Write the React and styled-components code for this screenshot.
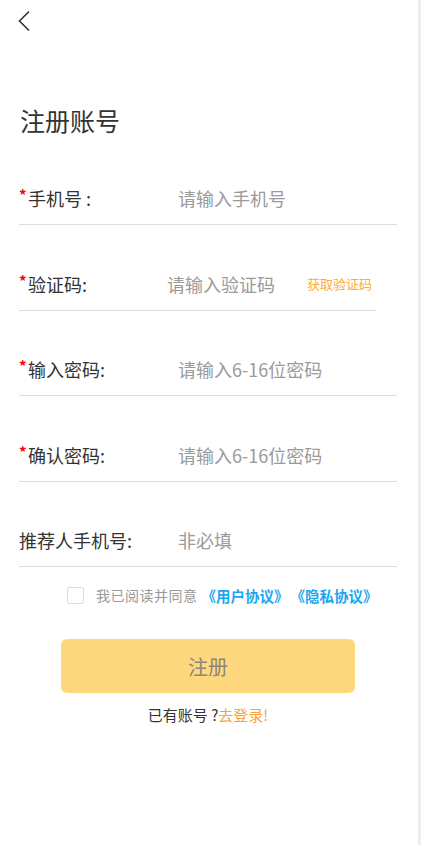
import styled, { createGlobalStyle } from 'styled-components';

const GlobalStyle = createGlobalStyle`
    body {
        margin: 0;
        background: #ffffff;
        font-family: 'Noto Sans CJK SC', 'Noto Sans', sans-serif;
        color: #333333;
    }
`;

const Screen = styled.div`
    display: flex;
    width: 421px;
    height: 845px;
    background: #ffffff;
`;

const Page = styled.div`
    flex: 1;
    display: flex;
    flex-direction: column;
    padding: 0 21px 0 19px;
`;

const ScrollTrack = styled.div`
    width: 3px;
    background: #eeeeee;
`;

const TopBar = styled.div`
    height: 40px;
    display: flex;
    align-items: center;
`;

const BackButton = styled.button`
    width: 24px;
    height: 30px;
    margin: 2px 0 0 -7px;
    padding: 0;
    border: none;
    background: none;
    display: flex;
    align-items: center;
    justify-content: center;
`;

const Title = styled.h1`
    margin: 63px 0 0 1px;
    font-size: 25px;
    line-height: 35px;
    font-weight: 400;
    color: #333333;
`;

const Form = styled.div`
    display: flex;
    flex-direction: column;
    gap: 32.5px;
    margin-top: 34px;
`;

const Row = styled.div`
    display: flex;
    align-items: center;
    height: 52px;
    width: ${({ $short }) => ($short ? '357px' : '100%')};
    border-bottom: 1px solid #dddddd;
`;

const Label = styled.label`
    width: ${({ $width }) => $width || 159}px;
    flex-shrink: 0;
    display: flex;
    align-items: center;
    font-size: 18px;
    color: #333333;
    white-space: pre;
`;

const Star = styled.span`
    color: #ff0000;
    font-size: 15px;
    font-weight: 700;
    width: 9px;
    align-self: flex-start;
    margin-top: -1px;
`;

const Input = styled.input`
    flex: 1;
    min-width: 0;
    border: none;
    outline: none;
    padding: 0;
    background: transparent;
    font-family: inherit;
    font-size: 18px;
    color: #333333;

    &::placeholder {
        color: #9a9a9a;
    }
`;

const CodeLink = styled.span`
    font-size: 13px;
    color: #ffa93a;
    margin-right: 4px;
    white-space: nowrap;
`;

const Agreement = styled.div`
    display: flex;
    align-items: center;
    height: 20px;
    margin-top: 18px;
    padding-left: 48px;
    font-size: 14px;
    white-space: nowrap;
`;

const CheckBox = styled.span`
    width: 15px;
    height: 15px;
    border: 1px solid #dddddd;
    border-radius: 2px;
    margin-right: 12px;
`;

const Muted = styled.span`
    color: #999999;
    letter-spacing: 0.5px;
`;

const Link = styled.span`
    color: #1aa7f0;
    font-weight: 700;
    font-size: 14.5px;
    margin-left: ${({ $gap }) => $gap}px;
`;

const SubmitButton = styled.button`
    align-self: center;
    width: 294px;
    height: 54px;
    margin-top: 34px;
    border: none;
    border-radius: 6px;
    background: #fdd87d;
    color: #8b877a;
    font-family: inherit;
    font-size: 20px;
`;

const LoginHint = styled.div`
    margin-top: 12px;
    text-align: center;
    font-size: 15px;
    line-height: 20px;
    color: #333333;
`;

const Accent = styled.span`
    color: #f9a23b;
`;

const fields = [
    { label: '手机号 :', placeholder: '请输入手机号', required: true },
    { label: '验证码:', placeholder: '请输入验证码', required: true, code: true },
    { label: '输入密码:', placeholder: '请输入6-16位密码', required: true },
    { label: '确认密码:', placeholder: '请输入6-16位密码', required: true },
    { label: '推荐人手机号:', placeholder: '非必填' },
];

export default function App() {
    return (
        <>
            <GlobalStyle />
            <Screen>
                <Page>
                    <TopBar>
                        <BackButton aria-label="返回">
                            <svg width="14" height="22" viewBox="0 0 14 22">
                                <polyline
                                    points="12,1.5 2.5,11 12,20.5"
                                    fill="none"
                                    stroke="#333"
                                    strokeWidth="1.6"
                                />
                            </svg>
                        </BackButton>
                    </TopBar>
                    <Title>注册账号</Title>
                    <Form>
                        {fields.map((f) => (
                            <Row key={f.label} $short={f.code}>
                                <Label $width={f.code ? 148 : 159}>
                                    {f.required && <Star>*</Star>}
                                    {f.label}
                                </Label>
                                <Input placeholder={f.placeholder} />
                                {f.code && <CodeLink>获取验证码</CodeLink>}
                            </Row>
                        ))}
                    </Form>
                    <Agreement>
                        <CheckBox />
                        <Muted>我已阅读并同意</Muted>
                        <Link $gap={4}>《用户协议》</Link>
                        <Link $gap={2}>《隐私协议》</Link>
                    </Agreement>
                    <SubmitButton>注册</SubmitButton>
                    <LoginHint>
                        已有账号 ?<Accent>去登录!</Accent>
                    </LoginHint>
                </Page>
                <ScrollTrack />
            </Screen>
        </>
    );
}
